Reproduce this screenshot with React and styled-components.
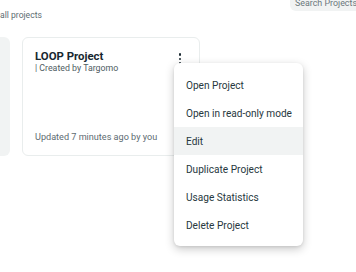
import React from 'react';
import styled, { createGlobalStyle } from 'styled-components';

const GlobalStyle = createGlobalStyle`
  html, body {
    height: 100%;
  }
  html {
    overflow: hidden;
  }
  body {
    margin: 0;
    background: #ffffff;
    font-family: Roboto, "Liberation Sans", sans-serif;
    color: #1c2b33;
  }
`;

const Page = styled.div`
  margin-top: -21px;
  width: 356px;
  min-height: 293px;
`;

const Header = styled.div`
  display: flex;
  justify-content: space-between;
  align-items: flex-start;
`;

const Description = styled.p`
  margin: 30px 0 0 0;
  font-size: 8.6px;
  line-height: 12px;
  color: #5d6b71;
`;

const SearchBox = styled.div`
  width: 80px;
  height: 32px;
  margin-right: -14px;
  padding: 0 0 2px 5px;
  display: flex;
  align-items: flex-end;
  box-sizing: border-box;
  background: #f1f3f3;
  border-radius: 6px;
  font-size: 8.9px;
  line-height: 12px;
  color: #6b777c;
  white-space: nowrap;
  overflow: hidden;
`;

const CardRow = styled.div`
  display: flex;
  gap: 12px;
  margin-top: 16px;
  margin-left: -168px;
`;

const GhostCard = styled.div`
  width: 178px;
  height: 119px;
  flex: none;
  background: #f1f3f3;
  border-radius: 6px;
`;

const Card = styled.div`
  position: relative;
  width: 178px;
  height: 119px;
  flex: none;
  box-sizing: border-box;
  border: 1px solid #e9eded;
  border-radius: 6px;
  padding: 12px 12px 12px 12px;
  display: flex;
  flex-direction: column;
`;

const CardTop = styled.div`
  display: flex;
  justify-content: space-between;
  align-items: flex-start;
`;

const Title = styled.div`
  font-size: 11.4px;
  font-weight: 700;
  line-height: 13px;
  color: #172730;
`;

const Subtitle = styled.div`
  font-size: 8.8px;
  line-height: 11px;
  color: #4f5d63;
`;

const Footer = styled.div`
  margin-top: auto;
  font-size: 9.1px;
  line-height: 12px;
  color: #5d6b71;
`;

const Kebab = styled.div`
  display: flex;
  flex-direction: column;
  gap: 2px;
  padding: 3px 6px 0 0;
  span {
    width: 2.5px;
    height: 2.5px;
    border-radius: 50%;
    background: #1c2b33;
  }
`;

const Menu = styled.ul`
  position: absolute;
  left: 151px;
  top: 25px;
  width: 129px;
  margin: 0;
  padding: 8px 0 7px 0;
  list-style: none;
  background: #ffffff;
  border-radius: 6px;
  box-shadow: 0 3px 10px rgba(0, 0, 0, 0.22), 0 1px 3px rgba(0, 0, 0, 0.08);
  z-index: 2;
`;

const MenuItem = styled.li`
  height: 28px;
  display: flex;
  align-items: center;
  padding-left: 12px;
  font-size: 10.1px;
  color: #273840;
  background: ${(p) => (p.$active ? '#f1f3f3' : 'transparent')};
  white-space: nowrap;
`;

const items = [
  'Open Project',
  'Open in read-only mode',
  'Edit',
  'Duplicate Project',
  'Usage Statistics',
  'Delete Project',
];

export default function App() {
  return (
    <>
      <GlobalStyle />
      <Page>
        <Header>
          <Description>all projects</Description>
          <SearchBox>Search Projects</SearchBox>
        </Header>
        <CardRow>
          <GhostCard />
          <Card>
            <CardTop>
              <div>
                <Title>LOOP Project</Title>
                <Subtitle>| Created by Targomo</Subtitle>
              </div>
              <Kebab>
                <span />
                <span />
                <span />
              </Kebab>
            </CardTop>
            <Footer>Updated 7 minutes ago by you</Footer>
            <Menu>
              {items.map((label) => (
                <MenuItem key={label} $active={label === 'Edit'}>
                  {label}
                </MenuItem>
              ))}
            </Menu>
          </Card>
        </CardRow>
      </Page>
    </>
  );
}
